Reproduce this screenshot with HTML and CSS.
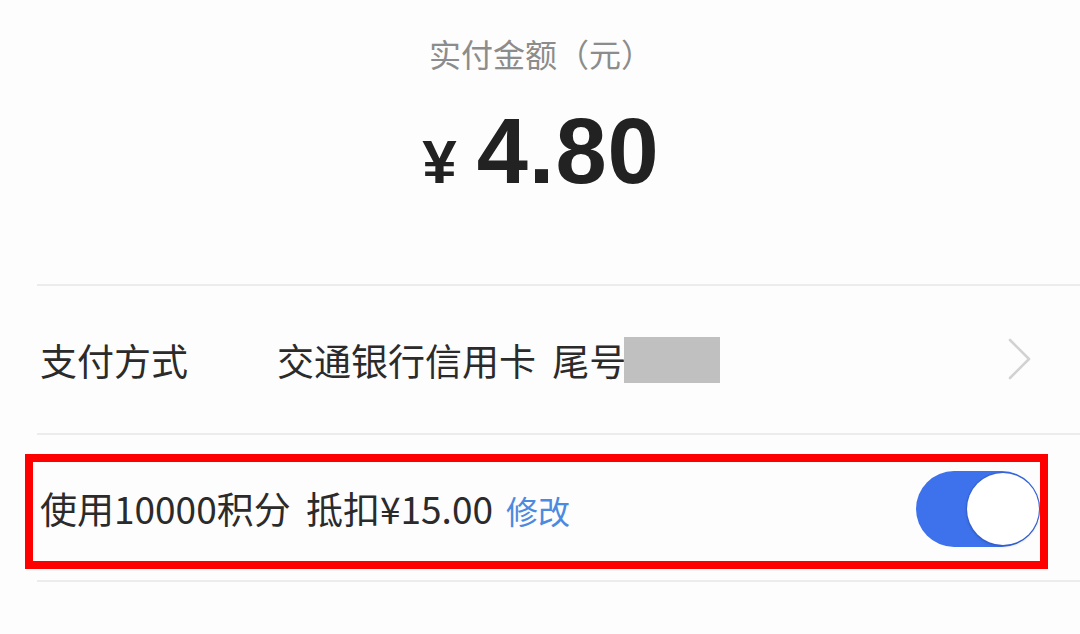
FILE: index.html
```html
<!DOCTYPE html>
<html lang="zh-CN">
<head>
<meta charset="utf-8">
<link rel="stylesheet" href="styles.css">
</head>
<body>
<div class="page">
  <section class="summary">
    <div class="summary-title">实付金额（元）</div>
    <div class="price"><span class="currency">¥</span><span class="amount">4.80</span></div>
  </section>
  <div class="list">
    <div class="row">
      <div class="label">支付方式</div>
      <div class="value">交通银行信用卡 尾号<span class="mask"></span></div>
      <svg class="chevron" width="26" height="44" viewBox="0 0 26 44"><path d="M3 3 L22 22 L3 41" fill="none" stroke="#d2d2d2" stroke-width="2.6" stroke-linecap="round" stroke-linejoin="round"/></svg>
    </div>
    <div class="row row-points">
      <div class="points-text">使用<span class="num">10000</span>积分 抵扣<span class="num">¥15.00</span><span class="edit">修改</span></div>
      <div class="toggle"><span class="knob"></span></div>
      <div class="highlight"></div>
    </div>
  </div>
</div>
</body>
</html>
```
FILE: styles.css
```css
* { box-sizing: border-box; }
html, body { margin: 0; padding: 0; background: #fdfdfd; }
body {
  font-family: "Noto Sans CJK SC", "Noto Sans", sans-serif;
  color: #2b2b2b;
}
.page { width: 1080px; height: 634px; overflow: hidden; }
.summary {
  height: 284px;
  display: flex;
  flex-direction: column;
  align-items: center;
}
.summary-title {
  margin-top: 32px;
  font-size: 32px;
  line-height: 42px;
  color: #8c8c8c;
  padding-left: 2px;
}
.price {
  margin-top: 31px;
  display: flex;
  align-items: baseline;
  font-family: "Liberation Sans", Arial, sans-serif;
  font-weight: bold;
  color: #222;
  line-height: 1;
  margin-left: 2px;
}
.currency { font-size: 62px; margin-right: 20px; }
.amount { font-size: 92px; letter-spacing: 1px; }
.list { margin-left: 37px; }
.row {
  position: relative;
  height: 149px;
  border-top: 2px solid #ececec;
  display: flex;
  align-items: center;
  padding-left: 3px;
  font-size: 37px;
}
.row-points { border-bottom: 2px solid #ececec; height: 149px; }
.label { width: 237px; color: #2b2b2b; }
.value { flex: 1; display: flex; align-items: center; color: #2b2b2b; word-spacing: 8px; }
.mask {
  display: inline-block;
  width: 96px;
  height: 46px;
  background: #c0c0c0;
  margin-left: -2px;
}
.chevron { margin-right: 47px; margin-top: -1px; }
.points-text { flex: 1; color: #2b2b2b; margin-top: 0; word-spacing: 7px; }
.num { letter-spacing: 0; }
.edit { color: #4a8ae0; font-size: 32px; margin-left: 13px; letter-spacing: 0; }
.toggle {
  width: 124px;
  height: 76px;
  border-radius: 38px;
  background: #3d72ec;
  margin-right: 40px;
  margin-top: 2px;
  display: flex;
  justify-content: flex-end;
  align-items: center;
  padding-right: 1px;
}
.knob {
  width: 72px;
  height: 72px;
  border-radius: 50%;
  background: #fff;
  box-shadow: 0 0 0 1px rgba(50, 90, 200, 0.6), 0 1px 3px rgba(0, 0, 0, 0.25);
}
.highlight {
  position: absolute;
  left: -12px;
  top: 19px;
  width: 1023px;
  height: 115px;
  border: 8px solid #ff0000;
  pointer-events: none;
}
```
